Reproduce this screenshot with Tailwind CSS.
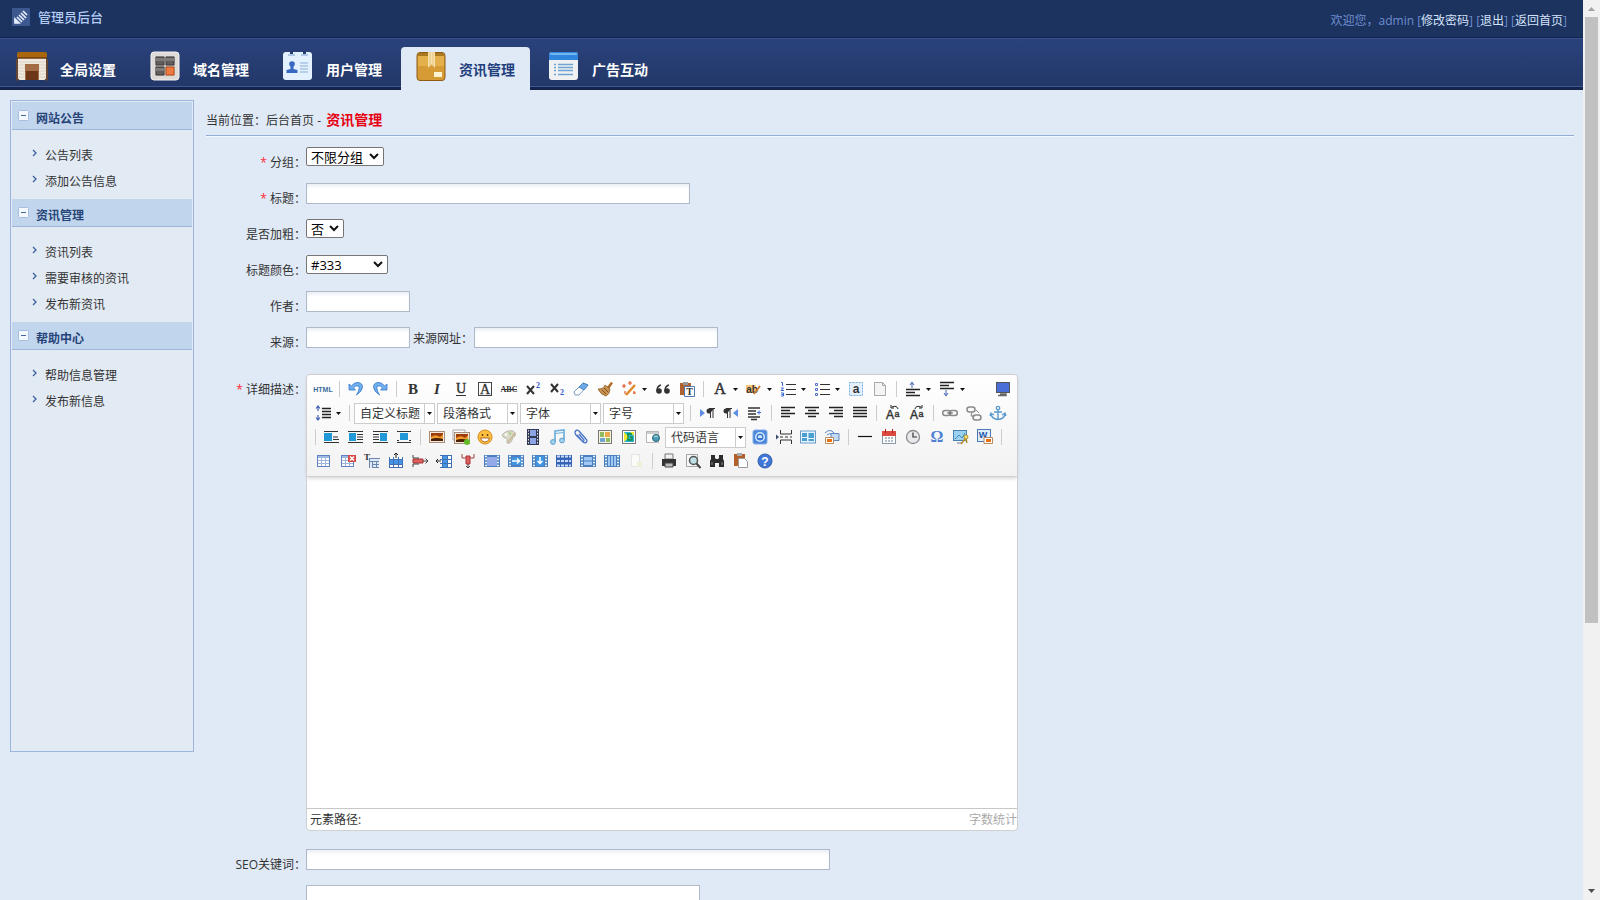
<!DOCTYPE html>
<html lang="zh-CN">

<head>
    <meta charset="UTF-8">
    <meta name="viewport" content="width=device-width, initial-scale=1.0">
    <title>管理员后台</title>
    <script src="https://cdn.jsdelivr.net/npm/@tailwindcss/browser@4"></script>
</head>

<body class="flex h-screen overflow-hidden bg-[#e0eaf6] font-['Open_Sans','Noto_Sans_CJK_SC',sans-serif] text-xs text-[#333]">
    <div class="h-full min-w-0 flex-1 overflow-hidden">
        <header>
            <div class="flex h-[38px] items-start justify-between border-b border-[#15244c] bg-[#1c325f] pr-4 pl-3">
                <div class="flex items-center gap-2 pt-2">
                    <svg class="h-[18px] w-[18px]" viewBox="0 0 18 18">
                        <rect width="18" height="18" rx="1" fill="#3c588f" />
                        <path d="M3 15v-4l4 4zM5 9l5 5M7 7l5 5M9 5l5 5M11 3l4 4" fill="#e8f0ff" stroke="#e8f0ff" stroke-width="1.7" />
                    </svg>
                    <h1 class="text-[13px] leading-[18px] font-medium text-[#b4cdf5]">管理员后台</h1>
                </div>
                <div class="pt-3 leading-[18px] text-[#6e8fcf]">欢迎您，admin
                    [<a href="#" class="text-[#d5e3fb]">修改密码</a>]
                    [<a href="#" class="text-[#d5e3fb]">退出</a>]
                    [<a href="#" class="text-[#d5e3fb]">返回首页</a>]
                </div>
            </div>
            <nav class="flex h-[52px] items-end gap-1 border-t border-[#3a5290] bg-linear-to-b from-[#2a427c] to-[#223767] pl-[2px] text-sm font-bold text-white shadow-[inset_0_-3px_#15244c,inset_0_-4px_#3f5792]">
                <a href="#" class="flex h-[43px] w-[129px] gap-3 pt-1 pl-[14px]">
                    <svg class="h-8 w-8" viewBox="0 0 32 32">
                        <rect x="2" y="3" width="28" height="26" rx="2" fill="#f0e9e0" />
                        <path d="M2 11h28M2 14h28M2 17h28M2 20h28M2 23h28M2 26h28" stroke="#ddd3c6" />
                        <path d="M1 3q0-2 2-2h26q2 0 2 2v4H1z" fill="#a8660d" />
                        <path d="M1 7h30" stroke="#6d3b0d" stroke-width="1.5" />
                        <path d="M1 8v19q0 2 2 2M31 8v19q0 2-2 2" fill="none" stroke="#7b4a20" stroke-width="1.5" />
                        <path d="M9 13h14v16H9z" fill="#a36c44" />
                        <path d="M10 20h12v9H10z" fill="#6b3718" />
                    </svg>
                    <span class="pt-1 leading-[30px]">全局设置</span>
                </a>
                <a href="#" class="flex h-[43px] w-[129px] gap-3 pt-1 pl-[14px]">
                    <svg class="h-8 w-8" viewBox="0 0 32 32">
                        <rect x="2" y="1" width="28" height="28" rx="3" fill="#dedad8" stroke="#f2f0ef" />
                        <path d="M6 5h20v20H6z" fill="#c5c0bd" />
                        <path d="M7 6h8v8H7zM17 6h8v8h-8zM7 16h8v8H7z" fill="#625e5d" stroke="#3f3b3a" />
                        <path d="M7 7h8v3H7zM17 7h8v3h-8zM7 17h8v3H7z" fill="#807b79" />
                        <path d="M17 16h8v8h-8z" fill="#f07b42" stroke="#b94a17" />
                    </svg>
                    <span class="pt-1 leading-[30px]">域名管理</span>
                </a>
                <a href="#" class="flex h-[43px] w-[129px] gap-3 pt-1 pl-[14px]">
                    <svg class="h-8 w-8" viewBox="0 0 32 32">
                        <rect x="1" y="1" width="29" height="28" rx="3" fill="#e3f1fe" />
                        <path d="M8 0h3v3H8zM21 0h3v3h-3z" fill="#243c72" />
                        <path d="M6 4h7M19 4h7" stroke="#7d9fd0" />
                        <circle cx="10" cy="13" r="2.800" fill="#3769bf" />
                        <path d="M8.500 14h3v4l4 1v3h-11v-3l4-1z" fill="#3769bf" />
                        <path d="M18 12h8M18 15h8M18 18h8M18 21h8" stroke="#abc4e3" stroke-width="1.500" />
                    </svg>
                    <span class="pt-1 leading-[30px]">用户管理</span>
                </a>
                <a href="#" class="flex h-[43px] w-[129px] gap-3 rounded-t-sm bg-[#e0eaf6] pt-1 pl-[14px] text-[#1f3f7d]">
                    <svg class="h-8 w-8" viewBox="0 0 32 32">
                        <rect x="2" y="1.500" width="28" height="28" rx="3" fill="#d69b34" stroke="#8c5b16" />
                        <path d="M3 4q0-2 2-2h22q2 0 2 2v1H3z" fill="#a8791f" />
                        <path d="M3 5h26v10H3z" fill="#e3b04c" />
                        <path d="M13 1h7v16l-3.500-4-3.500 4z" fill="#f5e1ae" />
                        <path d="M15 1v13M18 1v13" stroke="#e6c57c" />
                        <path d="M19 21h8v5h-8z" fill="#fff4d2" />
                    </svg>
                    <span class="pt-1 leading-[30px]">资讯管理</span>
                </a>
                <a href="#" class="flex h-[43px] w-[129px] gap-3 pt-1 pl-[14px]">
                    <svg class="h-8 w-8" viewBox="0 0 32 32">
                        <rect x="1" y="1" width="29" height="28" rx="3" fill="#eef0f2" />
                        <path d="M1 9V4q0-3 3-3h23q3 0 3 3v5z" fill="#2f86dc" />
                        <path d="M2 4q0-2 2-2h23q2 0 2 2z" fill="#72b6f4" />
                        <path d="M6 13.500h2M6 16.500h2M6 19.500h2M6 23.500h2M10 13.500h15M10 16.500h15M10 19.500h15M10 23.500h15" stroke="#6fa3d3" stroke-width="1.300" />
                    </svg>
                    <span class="pt-1 leading-[30px]">广告互动</span>
                </a>
            </nav>
        </header>

        <div class="flex items-start gap-3 pt-[10px] pr-[9px] pl-[10px]">
            <aside class="min-h-[652px] w-[184px] shrink-0 border border-[#9cb5dc] bg-[#e2eaf3] p-px" id="side"></aside>

            <main class="min-w-0 flex-1">
                <div class="border-b border-[#94afd4] pt-2 pb-[2px] leading-6 shadow-[0_1px_0_#f2f8ff]">
                    当前位置：<a href="#">后台首页</a> - <b class="pl-[2px] text-sm leading-6 text-[#e60012]">资讯管理</b>
                </div>

                <form class="pt-[11px]">
                    <div class="flex h-9 items-start">
                        <label for="group" class="w-[100px] text-right leading-[32px]"><span class="text-red-500">*</span> 分组：</label>
                        <div class="relative">
                            <select id="group" class="block h-[19px] w-[78px] appearance-none rounded-xs border border-[#767676] bg-white pl-1 text-[13px] leading-4 text-black"><option>不限分组</option></select>
                            <svg class="pointer-events-none absolute top-[6px] right-[5px] h-[7px] w-[10px]" viewBox="0 0 10 7"><path d="M1 1l4 4 4-4" fill="none" stroke="#111" stroke-width="2" /></svg>
                        </div>
                    </div>
                    <div class="flex h-9 items-start">
                        <label for="title" class="w-[100px] text-right leading-[32px]"><span class="text-red-500">*</span> 标题：</label>
                        <input id="title" type="text" class="h-[21px] w-96 border border-[#b0b9c8] bg-white px-1 shadow-[inset_0_3px_3px_#eef2f6]">
                    </div>
                    <div class="flex h-9 items-start">
                        <label for="bold" class="w-[100px] text-right leading-[32px]">是否加粗：</label>
                        <div class="relative">
                            <select id="bold" class="block h-[19px] w-[38px] appearance-none rounded-xs border border-[#767676] bg-white pl-1 text-[13px] leading-4 text-black"><option>否</option><option>是</option></select>
                            <svg class="pointer-events-none absolute top-[6px] right-[5px] h-[7px] w-[10px]" viewBox="0 0 10 7"><path d="M1 1l4 4 4-4" fill="none" stroke="#111" stroke-width="2" /></svg>
                        </div>
                    </div>
                    <div class="flex h-9 items-start">
                        <label for="color" class="w-[100px] text-right leading-[32px]">标题颜色：</label>
                        <div class="relative">
                            <select id="color" class="block h-[19px] w-[82px] appearance-none rounded-xs border border-[#767676] bg-white pl-1 text-[13px] leading-4 text-black"><option>#333</option></select>
                            <svg class="pointer-events-none absolute top-[6px] right-[5px] h-[7px] w-[10px]" viewBox="0 0 10 7"><path d="M1 1l4 4 4-4" fill="none" stroke="#111" stroke-width="2" /></svg>
                        </div>
                    </div>
                    <div class="flex h-9 items-start">
                        <label for="author" class="w-[100px] text-right leading-[32px]">作者：</label>
                        <input id="author" type="text" class="h-[21px] w-[104px] border border-[#b0b9c8] bg-white px-1 shadow-[inset_0_3px_3px_#eef2f6]">
                    </div>
                    <div class="flex h-9 items-start">
                        <label for="source" class="w-[100px] text-right leading-[32px]">来源：</label>
                        <input id="source" type="text" class="h-[21px] w-[104px] border border-[#b0b9c8] bg-white px-1 shadow-[inset_0_3px_3px_#eef2f6]">
                        <label for="url" class="pr-px pl-[3px] leading-6">来源网址：</label>
                        <input id="url" type="text" class="h-[21px] w-[244px] border border-[#b0b9c8] bg-white px-1 shadow-[inset_0_3px_3px_#eef2f6]">
                    </div>

                    <div class="flex items-start pt-[11px] pb-[18px]">
                        <label for="content" class="w-[100px] shrink-0 text-right leading-[32px]"><span class="text-red-500">*</span> 详细描述：</label>
                        <div class="w-[712px] rounded-sm border border-[#d0d0d0] bg-white">
                            <div id="toolbar" class="rounded-t-sm border-b border-[#d0d0d0] bg-linear-to-b from-white to-[#f2f2f2] pt-[2px] pb-[3px] pl-1 shadow-[0_1px_4px_#ccc]"></div>
                            <textarea id="content" class="block h-[331px] w-full resize-none outline-none"></textarea>
                            <div class="flex justify-between border-t border-[#c8c8c8] leading-[21px]">
                                <span class="pl-[3px]">元素路径:</span>
                                <span class="text-[#aaa]">字数统计</span>
                            </div>
                        </div>
                    </div>

                    <div class="flex h-9 items-start">
                        <label for="seo" class="w-[100px] text-right leading-[32px]">SEO关键词：</label>
                        <input id="seo" type="text" class="h-[21px] w-[524px] border border-[#b0b9c8] bg-white px-1 shadow-[inset_0_3px_3px_#eef2f6]">
                    </div>
                    <div class="flex items-start pl-[100px]">
                        <textarea aria-label="SEO描述" class="h-20 w-[394px] resize-none border border-[#b0b9c8] bg-white px-1"></textarea>
                    </div>
                </form>
            </main>
        </div>
    </div>

    <!-- scroll bar -->
    <div class="flex h-full w-[17px] shrink-0 flex-col items-center bg-[#f1f1f1]">
        <svg class="h-[17px] w-[17px]" viewBox="0 0 17 17"><path d="M5 11l3.500-4 3.500 4z" fill="#a3a3a3" /></svg>
        <div class="h-[70%] max-h-[606px] w-[13px] bg-[#c1c1c1]"></div>
        <svg class="mt-auto h-[17px] w-[17px]" viewBox="0 0 17 17"><path d="M5 6l3.500 4 3.500-4z" fill="#505050" /></svg>
    </div>

    <script>
        // sidebar menu
        const menu = [
            ["网站公告", ["公告列表", "添加公告信息"]],
            ["资讯管理", ["资讯列表", "需要审核的资讯", "发布新资讯"]],
            ["帮助中心", ["帮助信息管理", "发布新信息"]],
        ]

        document.querySelector("#side").innerHTML = menu.map(([title, items]) => `
            <h2 class="flex h-7 items-start gap-[7px] border-b border-[#9cb5dc] bg-[#c1d5ec] pl-[6px] font-bold text-[#264478]">
                <svg class="mt-2 h-[11px] w-[11px]" viewBox="0 0 11 11"><rect x=".5" y=".5" width="10" height="10" rx="1" fill="#f4f9ff" stroke="#a4bde0"/><path d="M3 5.500h5" stroke="#46689f"/></svg>
                <span class="pt-1 leading-[26px]">${title}</span>
            </h2>
            <ul class="pt-3 pb-[5px]">
                ${items.map(t => `<li class="flex h-[26px] items-start gap-2 pl-5">
                    <svg class="mt-[7px] h-2 w-[5px]" viewBox="0 0 5 8"><path d="M1 1l3 3-3 3" fill="none" stroke="#3d5f9f" stroke-width="1.300"/></svg>
                    <a href="#" class="leading-[28px]">${t}</a></li>`).join("")}
            </ul>`).join("")

        // editor icons, all on a 16 x 16 grid
        const serif = 'font-family="Liberation Serif" text-anchor="middle" fill="#333"'
        const sans = 'font-family="Liberation Sans" text-anchor="middle" fill="#333"'
        const film = '<path d="M0 2h16v12H0z" fill="#4d7fc0"/><path d="M1 3.500h2M1 6.500h2M1 9.500h2M1 12.500h2M13 3.500h2M13 6.500h2M13 9.500h2M13 12.500h2" stroke="#e6f2ff" stroke-width="1.500"/>'
        const grid = '<rect x="1.500" y="2.500" width="12" height="11" fill="#fff" stroke="#5f83c0"/><path d="M2 4h11" stroke="#9db9e6" stroke-width="2"/><path d="M2 7.500h11M2 10.500h11M5.500 5v8M9.500 5v8" stroke="#9db5de"/>'
        const photo = '<rect x=".5" y="2.500" width="15" height="11" fill="#f4e9dc" stroke="#a58f7c"/><path d="M2 4h12v8H2z" fill="#9c3d0b"/><path d="M2 8q4-3 7-1t5-2v5H2z" fill="#f09a2c"/><path d="M2 10q5-2 12 0v2H2z" fill="#4a2009"/>'
        const smallPhoto = '<path d="M7 8.500h8.500v6H7z" fill="#fff" stroke="#b78a60"/><path d="M9 10h5v3H9z" fill="#e8710e"/>'
        const bigA = `<text x="5" y="14" font-size="12" ${sans} stroke="#333" stroke-width=".4">A</text><text x="12" y="12" font-size="9" ${sans} stroke="#333" stroke-width=".4">a</text>`
        const curl = '<path d="M1 3v6h6.500L5.500 7q2-3 5-2 2 2-2 9 6-4 6-8 0-4-4.500-4.500Q6 1 3.500 5z" fill="#6fb1ee" stroke="#3476c8" stroke-width=".8"/>'

        const icons = {
            source: `<text x="8" y="10.500" font-size="7" font-weight="bold" ${sans} style="fill:#3a6c9c">HTML</text>`,
            undo: curl,
            redo: `<g transform="matrix(-1 0 0 1 16 0)">${curl}</g>`,
            bold: `<text x="8" y="13" font-size="15" font-weight="bold" ${serif}>B</text>`,
            italic: `<text x="8" y="13" font-size="15" font-weight="bold" font-style="italic" ${serif}>I</text>`,
            underline: `<text x="8" y="12" font-size="14" ${serif} stroke="#333" stroke-width=".4">U</text><path d="M3 14.500h10" stroke="#333"/>`,
            fontborder: `<rect x="1.500" y="1.500" width="13" height="13" fill="none" stroke="#444"/><text x="8" y="12.500" font-size="14" ${serif} stroke="#333" stroke-width=".3">A</text>`,
            strike: `<text x="8" y="11" font-size="8" ${serif} font-weight="bold">ABC</text><path d="M0 8.500h16" stroke="#333"/>`,
            sup: `<path d="M2 5l7 8M9 5l-7 8" stroke="#333" stroke-width="2"/><text x="13" y="7" font-size="8" font-weight="bold" ${serif} style="fill:#2c56c8">2</text>`,
            sub: `<path d="M2 3l7 8M9 3l-7 8" stroke="#333" stroke-width="2"/><text x="13" y="14" font-size="8" font-weight="bold" ${serif} style="fill:#2c56c8">2</text>`,
            eraser: '<path d="M1 11l9-9 5 2-9 10H2z" fill="#fff" stroke="#7c9fc4"/><path d="M6 6l4-4 5 2-4 5z" fill="#6cabe8" stroke="#4b83c0"/>',
            format: '<path d="M10 6l4-5 2 1-4 6z" fill="#b06a24"/><path d="M1 8q6 0 7-4l5 4q0 5-4 7-5-1-8-7z" fill="#c99452" stroke="#80501c" stroke-width=".7"/><path d="M5 9l4 4M7 7l4 4" stroke="#7f4f1e"/>',
            wand: '<path d="M5 14L14 4" stroke="#e08a2c" stroke-width="2.500"/><path d="M3 3v4M1 5h4M9 0v4M7 2h4M4 10v3M13 10v3M12 12h3" stroke="#e2582b" stroke-width="1.200"/>',
            quote: '<circle cx="4" cy="10" r="2.800" fill="#333"/><circle cx="12" cy="10" r="2.800" fill="#333"/><path d="M2 10q0-5 4-6M10 10q0-5 4-6" fill="none" stroke="#333" stroke-width="1.500"/>',
            pasteplain: `<path d="M1 2h11v12H1z" fill="#ad6331"/><path d="M4 1h5v3H4z" fill="#999"/><path d="M5.500 5.500h10v10h-10z" fill="#fff" stroke="#537ab0"/><text x="10.500" y="14" font-size="10" font-weight="bold" ${serif}>T</text>`,
            forecolor: `<text x="8" y="13" font-size="16" ${serif} stroke="#333" stroke-width=".5">A</text>`,
            backcolor: `<path d="M0 4h10v8H0z" fill="#fbc779"/><text x="6" y="11.500" font-size="10" font-weight="bold" ${sans}>ab</text><path d="M8 13l6-8" stroke="#c67a36" stroke-width="2"/>`,
            ol: '<path d="M6 3.500h10M6 8.500h10M6 13.500h10" stroke="#333" stroke-width="1.200"/><path d="M1 1.500h1.500V5M1 7h2.500L1 9.500h3M1 12h2.500v3H1M1.500 13.500h2" fill="none" stroke="#3868d0"/>',
            ul: '<path d="M6 3.500h10M6 8.500h10M6 13.500h10" stroke="#333" stroke-width="1.200"/><path d="M1.500 2.500h2v2h-2zM1.500 7.500h2v2h-2zM1.500 12.500h2v2h-2z" fill="none" stroke="#4f70d0"/>',
            selectall: `<rect x="1.500" y="1.500" width="13" height="13" fill="#e3effc" stroke="#78acdf" stroke-dasharray="2 1"/><text x="8" y="12" font-size="12" font-weight="bold" ${sans}>a</text>`,
            cleardoc: '<path d="M2.500 1.500h8l3 3v10h-11z" fill="#f4f4f4" stroke="#a8a8a8"/><path d="M10.500 1.500v3h3" fill="none" stroke="#a8a8a8"/>',
            rowtop: '<path d="M1 8.500h14M1 11.500h9M1 14.500h14" stroke="#222" stroke-width="1.300"/><path d="M7 7V2M5 4l2-3 2 3" fill="none" stroke="#4262b8"/>',
            rowbottom: '<path d="M1 1.500h14M1 4.500h9M1 7.500h14" stroke="#222" stroke-width="1.300"/><path d="M7 9v5M5 12l2 3 2-3" fill="none" stroke="#4262b8"/>',
            fullscreen: '<rect x="1.500" y="1.500" width="13" height="10" fill="#4a6ed8" stroke="#555"/><path d="M5 13h6v1.500H3" fill="none" stroke="#666" stroke-width="1.500"/>',
            lineheight: '<path d="M7 3.500h9M7 6.500h9M7 9.500h9M7 12.500h9" stroke="#222" stroke-width="1.300"/><path d="M3 1v5M1 3.500L3 1l2 2.500M3 10v5M1 12.500L3 15l2-2.500" fill="none" stroke="#4262b8" stroke-width="1.200"/>',
            ltr: '<path d="M1 4l5 4-5 4z" fill="#5c8fe0"/><path d="M15 3.500h-5a2 2 0 000 5h1" fill="#333"/><path d="M11.500 3v10M14 3v10M10 3.500h6" stroke="#333"/>',
            rtl: '<path d="M15 4l-5 4 5 4z" fill="#5c8fe0"/><path d="M8 3.500H3a2 2 0 000 5h1" fill="#333"/><path d="M4.500 3v10M7 3v10M3 3.500h6" stroke="#333"/>',
            indent: '<path d="M1 3h12M1 6h8M1 9h8M1 12h12M4 14.500h6" stroke="#333" stroke-width="1.300"/><path d="M10 7.500h4M12 5.500v4" stroke="#4272d8"/>',
            left: '<path d="M1 2.500h14M1 5.500h9M1 8.500h14M1 11.500h9" stroke="#222" stroke-width="1.300"/>',
            center: '<path d="M1 2.500h14M4 5.500h8M1 8.500h14M4 11.500h8" stroke="#222" stroke-width="1.300"/>',
            right: '<path d="M1 2.500h14M6 5.500h9M1 8.500h14M6 11.500h9" stroke="#222" stroke-width="1.300"/>',
            justify: '<path d="M1 2.500h14M1 5.500h14M1 8.500h14M1 11.500h14" stroke="#222" stroke-width="1.300"/>',
            upper: bigA + '<path d="M13 4q-1-4-6-2M6 0v3h3" fill="none" stroke="#222"/>',
            lower: bigA + '<path d="M6 4q1-4 6-2M13 0v3h-3" fill="none" stroke="#222"/>',
            link: '<rect x=".7" y="5.500" width="8" height="5" rx="2.500" fill="none" stroke="#8a8a8a" stroke-width="1.500"/><rect x="7.300" y="5.500" width="8" height="5" rx="2.500" fill="none" stroke="#8a8a8a" stroke-width="1.500"/><path d="M5 8h6" stroke="#666"/>',
            unlink: '<rect x="1" y="2" width="8" height="5" rx="2.500" fill="none" stroke="#8a8a8a" stroke-width="1.500"/><rect x="7" y="10" width="8" height="5" rx="2.500" fill="none" stroke="#8a8a8a" stroke-width="1.500"/><path d="M6 7l-1 4h4M10 5l3 3" fill="none" stroke="#8a8a8a"/>',
            anchor: '<circle cx="8" cy="3" r="1.700" fill="none" stroke="#5a9bd0" stroke-width="1.300"/><path d="M8 5v9M4 7h8M1 9q1 5 7 5.500Q14 14 15 9M0 11l1-3 3 2M12 10l3-2 1 3" fill="none" stroke="#5a9bd0" stroke-width="1.400"/>',
            imgnone: '<path d="M0 2.500h14M9 10.500h6M9 8h5M0 13.500h15" stroke="#333"/><path d="M0 4h8v8H0z" fill="#2298d8"/>',
            imgleft: '<path d="M0 2.500h15M9 5.500h6M9 8h6M9 10.500h6M0 13.500h15" stroke="#333"/><path d="M1 4h7v8H1z" fill="#2298d8"/>',
            imgright: '<path d="M1 2.500h15M1 5.500h6M1 8h6M1 10.500h6M1 13.500h15" stroke="#333"/><path d="M8 4h7v8H8z" fill="#2298d8"/>',
            imgcenter: '<path d="M1 2.500h14M1 13.500h14M1 11.500h2M13 11.500h2" stroke="#333"/><path d="M4 4h8v7H4z" fill="#2298d8"/>',
            image: photo,
            images: '<path d="M0 1h12v10H0z" fill="#fff" stroke="#aaa"/><g transform="translate(1 1)">' + photo + '</g><circle cx="14" cy="13" r="3" fill="#63bb2a"/>',
            emotion: '<circle cx="8" cy="8" r="7" fill="#fdbf3f" stroke="#d98a1d"/><path d="M5.500 5v2M10.500 5v2" stroke="#7a3e0b" stroke-width="1.500"/><path d="M3.500 9h9q-1 4-4.500 4t-4.500-4z" fill="#fff" stroke="#9a5212" stroke-width=".8"/>',
            scrawl: '<path d="M1 6q4-5 11-4 4 2 2 5-3 1-3 4-1 4-5 3 1-4-1-5-3 0-4-3z" fill="#ddd9cb" stroke="#b8b4a6"/><circle cx="5" cy="5.500" r="1.200" fill="#fff"/><circle cx="9" cy="4.500" r="1.200" fill="#9ccf80"/><path d="M7 13l7-9" stroke="#c8b896" stroke-width="1.500"/>',
            video: '<path d="M2 0h12v16H2z" fill="#333a55"/><path d="M5 1h6v6H5zM5 9h6v6H5z" fill="#8da4e6"/><path d="M3.500 1v15M12.500 1v15" stroke="#ddd" stroke-dasharray="1.500 1.500"/>',
            music: '<path d="M6 13V2l9-1v10" fill="none" stroke="#6fb0dc" stroke-width="1.700"/><path d="M6 4.500l9-1" stroke="#6fb0dc"/><circle cx="4" cy="13" r="2.400" fill="#a4d3f0" stroke="#5c9dcc"/><circle cx="13" cy="11.500" r="2.400" fill="#a4d3f0" stroke="#5c9dcc"/>',
            attach: '<path d="M4 6l6 7q3 2 4-1 0-1-1-2L6 2Q3 0 2 3q0 2 1 3l6 6q2 1 2-1L6 5" fill="none" stroke="#4572c8" stroke-width="1.300"/>',
            map: '<rect x="1.500" y="1.500" width="13" height="13" fill="#f7f3df" stroke="#777"/><path d="M3 3h4v5H3zM9 9h4v4H9z" fill="#8fbb61"/><path d="M8 3h5v5H8z" fill="#e8a94c"/><path d="M3 9h5v4H3z" fill="#72a5cf"/>',
            gmap: '<rect x="1.500" y="1.500" width="13" height="13" fill="#fff" stroke="#777"/><path d="M3 3h10v10H3z" fill="#22b5d8"/><path d="M3 3l5 5-5 5zM9 3h4v4z" fill="#f2e92e"/><path d="M11 5H7v6h4V8H9" fill="none" stroke="#1d8b39" stroke-width="1.400"/>',
            frame: '<path d="M1.500 2.500h12v11h-12z" fill="#fff" stroke="#b5b5b5"/><path d="M2 4h11" stroke="#ccc" stroke-width="2"/><circle cx="11" cy="9" r="3.500" fill="#4c99b4" stroke="#2c667c"/><path d="M9 8q2-2 4 0" stroke="#c6f0d8" fill="none"/>',
            app: '<rect x="1" y="1" width="14" height="14" rx="2" fill="#4c86da" stroke="#7fabe6"/><circle cx="8" cy="8" r="5" fill="#d5e8ff"/><circle cx="8" cy="8" r="3.500" fill="#3a78d0"/><path d="M6 7q2-2 4 0v2H6z" fill="#cfe3fb"/>',
            pagebreak: '<path d="M4.500 1v4h11V1M4.500 15v-4h11v4M4 8h3M9 8h3M14 8h2" fill="none" stroke="#333"/><path d="M0 5.500L3 8l-3 2.500z" fill="#3b4a70"/>',
            template: '<rect x=".5" y="2" width="15" height="12" fill="#e4f3ff" stroke="#6a9bc8"/><path d="M2 4h5v4H2zM2 9h5v3H2zM8.500 4H14v5H8.500zM8.500 10H14v2H8.500z" fill="#4b9ed0"/>',
            background: '<path d="M1 4q5-5 9 0M3 6q3-3 5 0" fill="none" stroke="#4f80c8"/><path d="M7 4.500h8v7H7z" fill="#c4dbf7" stroke="#6186bd"/><path d="M1.500 8.500h8v6h-8z" fill="#fff" stroke="#b78a60"/><path d="M3 10h5v3H3z" fill="#e8710e"/>',
            hr: '<path d="M1 7.500h14" stroke="#111" stroke-width="1.200"/>',
            date: '<rect x="1.500" y="2.500" width="13" height="12" fill="#fff" stroke="#8a9aab"/><path d="M1 2h14v5H1z" fill="#dc4a40"/><path d="M4.500 0v4M11.500 0v4" stroke="#a22"/><path d="M4 9h2M7 9h2M10 9h2M4 12h2M7 12h2M10 12h2" stroke="#97a9b8" stroke-width="1.600"/>',
            time: '<circle cx="8" cy="8" r="6.500" fill="#e9e9ec" stroke="#8c8c93" stroke-width="1.300"/><path d="M8 3.500V8h4" fill="none" stroke="#333" stroke-width="1.200"/>',
            omega: `<text x="8" y="13" font-size="16" font-weight="bold" ${serif} style="fill:#4f7fd4">Ω</text>`,
            snapscreen: '<rect x=".5" y="1.500" width="13" height="10" fill="#9bd0ee" stroke="#4381b0"/><path d="M2 10l4-4 3 3 3-5" stroke="#3f8fbf" fill="none"/><path d="M4 14h5" stroke="#779"/><circle cx="13" cy="8" r="2" fill="#fbe273" stroke="#b78e2c"/><path d="M12 10l-4 5M13 10l1 4" stroke="#b78e2c" stroke-width="1.500"/>',
            word: `<rect x=".5" y=".5" width="13" height="12" fill="#e3eefb" stroke="#4c78b5"/><text x="6" y="9" font-size="9" font-weight="bold" ${sans} style="fill:#1c56a8">W</text>${smallPhoto}`,
            table: grid,
            deltable: grid + '<path d="M8 2h8v7H8z" fill="#d84844"/><path d="M10 3.500l4 4M14 3.500l-4 4" stroke="#fff" stroke-width="1.500"/>',
            parabefore: `<text x="3" y="7" font-size="9" font-weight="bold" ${serif}>T</text><path d="M5 5h10v10H5z" fill="#dfe8f5"/><path d="M5 5.500h11M5 8.500h10M8 11.500h7M8 14.500h7M5.500 5v10M8.500 8v7M12.500 8v7" stroke="#6b85ae"/>`,
            insertrow: '<path d="M1 5h14v10H1z" fill="#fff"/><path d="M1 7h14v4H1z" fill="#4796e6"/><path d="M1.500 4v11M5.500 4v11M10.500 4v11M14.500 4v11M1 6.500h14M1 11.500h14M1 14.500h14" stroke="#3f6fb4"/><path d="M8 5V0M6 2l2-2 2 2" stroke="#222" fill="none"/>',
            deleterow: '<path d="M1 6h10v4H1z" fill="#e06060" stroke="#a33"/><path d="M1 2v3h6M1 14v-3h6" stroke="#444" fill="none"/><path d="M11 8h5M13.500 5.500L16 8l-2.500 2.500" stroke="#444" fill="none"/>',
            insertcol: '<path d="M5 2h10v13H5z" fill="#fff"/><path d="M7 2h5v13H7z" fill="#4796e6"/><path d="M4 2.500h12M4 6.500h12M4 10.500h12M4 14.500h12M6.500 2v13M11.500 2v13M15.500 2v13" stroke="#3f6fb4"/><path d="M5 8H0M2 6L0 8l2 2" stroke="#222" fill="none"/>',
            deletecol: '<path d="M6 3h4v8H6z" fill="#e06060" stroke="#a33"/><path d="M2 1v4h4M14 1v4h-4" stroke="#a44" fill="none"/><path d="M8 11v4M6 13l2 2 2-2" stroke="#444" fill="none"/>',
            mergecells: film + '<path d="M3 4h10v9H3z" fill="#94a9e8"/>',
            mergeright: film + '<path d="M4 4h9v8H4z" fill="#3f94e0"/><path d="M4 8h7M9 5.500L11.500 8 9 10.500" fill="none" stroke="#fff" stroke-width="1.500"/>',
            mergedown: film + '<path d="M4 3h8v10H4z" fill="#3f94e0"/><path d="M8 4v6M5.500 8L8 10.500 10.500 8" fill="none" stroke="#fff" stroke-width="1.500"/>',
            splitcells: '<path d="M0 2h16v12H0z" fill="#3764b4"/><path d="M1 3.500h14M1 8h14M1 12.500h14" stroke="#c9dcff" stroke-width="2" stroke-dasharray="3 1"/>',
            splitrows: film + '<path d="M4 4h8v3.500H4zM4 8.500h8V12H4z" fill="#9fc9f3"/>',
            splitcols: film + '<path d="M4 3h2v10H4zM7 3h2v10H7zM10 3h2v10h-2z" fill="#9fc9f3"/>',
            charts: '<path d="M3.500 1.500h8v12h-8z" fill="#fafaf8" stroke="#e4e4e0"/><path d="M9 9h5v5H9z" fill="#f1efd8"/>',
            print: '<path d="M4 1h8v5H4z" fill="#f2f2f2" stroke="#777"/><path d="M1 6h14v7H1z" fill="#333"/><path d="M4 10h8v4H4z" fill="#bbb" stroke="#444"/>',
            preview: '<path d="M1.500 1.500h11v12h-11z" fill="#f7f7f7" stroke="#a5a5a5"/><circle cx="8.500" cy="7.500" r="4" fill="#bfe0e6" stroke="#555" stroke-width="1.500"/><path d="M11.500 10.500l4 4.500" stroke="#444" stroke-width="2"/>',
            search: '<path d="M2 2h4v3l1 1h2l1-1V2h4v4l1 2v6h-5v-4H6v4H1V8l1-2z" fill="#2c2c2c"/><path d="M3 9v3M13 9v3" stroke="#888"/>',
            paste: '<path d="M1 1h11v12H1z" fill="#b55f2c"/><path d="M4 0h5v3H4z" fill="#aaa"/><path d="M5.500 5.500h6l3 3v6h-9z" fill="#fff" stroke="#9a9a9a"/>',
            help: `<circle cx="8" cy="8" r="7" fill="#4178d8" stroke="#2b5cae"/><text x="8" y="12.500" font-size="12" font-weight="bold" ${sans} style="fill:#fff">?</text>`,
        }

        // "|" separator, "name+" button with arrow, "=text" drop-down, ">" pushes the rest to the right
        const rows = [
            "source | undo redo | bold italic underline fontborder strike sup sub eraser format wand+ quote pasteplain | forecolor+ backcolor+ ol+ ul+ selectall cleardoc | rowtop+ rowbottom+ > fullscreen",
            "lineheight+ | =自定义标题 =段落格式 =字体 =字号 | ltr rtl indent | left center right justify | upper lower | link unlink anchor",
            "| imgnone imgleft imgright imgcenter | image images emotion scrawl video music attach map gmap frame =代码语言 app pagebreak template background | hr date time omega snapscreen word |",
            "table deltable parabefore insertrow deleterow insertcol deletecol mergecells mergeright mergedown splitcells splitrows splitcols charts | print preview search paste help",
        ]
        const arrow = '<svg class="h-[3px] w-[5px]" viewBox="0 0 5 3"><path d="M0 0h5L2.500 3z" fill="#111"/></svg>'

        const draw = (item) => {
            if (item === "|") return '<span class="mx-1 h-4 w-px bg-[#ccc]"></span>'
            if (item === ">") return '<span class="flex-1"></span>'
            if (item[0] === "=") return `<button type="button" class="mr-[2px] flex h-[21px] w-[81px] items-stretch border border-[#ccc] bg-white text-left">
                <span class="flex-1 pl-[5px] leading-5">${item.slice(1)}</span><span class="grid w-[10px] place-items-center border-l border-[#ccc]">${arrow}</span></button>`
            const name = item.replace("+", "")
            const svg = `<svg class="h-4 w-4 overflow-visible" viewBox="0 0 16 16">${icons[name]}</svg>`
            if (item.endsWith("+")) return `<button type="button" aria-label="${name}" class="flex h-6 w-[34px] items-center gap-[5px] pl-1">${svg}${arrow}</button>`
            return `<button type="button" aria-label="${name}" class="grid h-6 w-6 place-items-center">${svg}</button>`
        }

        document.querySelector("#toolbar").innerHTML = rows.map(row =>
            `<div class="flex h-6 items-center pr-[2px] last:pl-px">${row.split(" ").map(draw).join("")}</div>`).join("")
    </script>
</body>

</html>
